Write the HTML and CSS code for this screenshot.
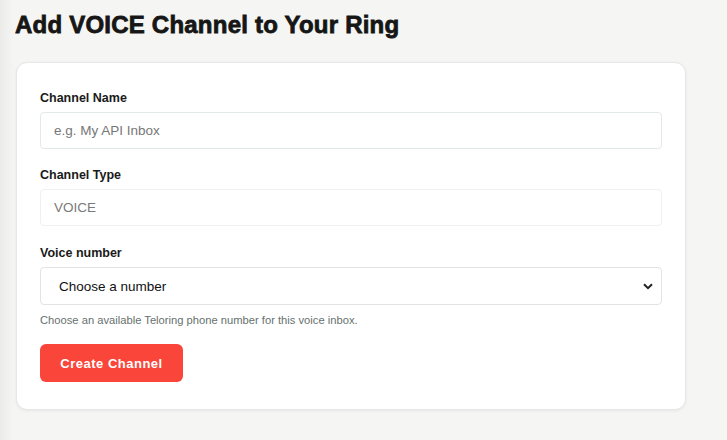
FILE: index.html
```html
<!DOCTYPE html>
<html lang="en">
<head>
<meta charset="utf-8">
<title>Add VOICE Channel</title>
<link rel="stylesheet" href="styles.css">
</head>
<body>
<main class="page">
  <h1 class="title">Add VOICE Channel to Your Ring</h1>
  <form class="card">
    <div class="field">
      <label class="label">Channel Name</label>
      <input class="input" type="text" placeholder="e.g. My API Inbox">
    </div>
    <div class="field field-type">
      <label class="label">Channel Type</label>
      <input class="input input-readonly" type="text" value="VOICE" readonly>
    </div>
    <div class="field field-last">
      <label class="label">Voice number</label>
      <div class="select">
        <span class="select-text">Choose a number</span>
        <svg class="chevron" width="10" height="7" viewBox="0 0 10 7"><path d="M1 1.2 L5 5.2 L9 1.2" fill="none" stroke="#222" stroke-width="2"/></svg>
      </div>
      <p class="help">Choose an available Teloring phone number for this voice inbox.</p>
    </div>
    <div class="actions">
      <button class="btn" type="button">Create Channel</button>
    </div>
  </form>
</main>
</body>
</html>
```
FILE: styles.css
```css
html, body {
  margin: 0;
  height: 100%;
}
body {
  background: linear-gradient(to right, #ebebe9 0px, #f5f5f3 14px, #f5f5f3 100%);
  font-family: "Liberation Sans", Arial, sans-serif;
  color: #1a1a1a;
}
.page {
  padding: 10px 41px 0 15px;
}
.title {
  margin: 0 0 22px 0;
  font-size: 24px;
  line-height: 30px;
  font-weight: 700;
  color: #161616;
  -webkit-text-stroke: 0.8px #161616;
  letter-spacing: 0.22px;
}
.card {
  margin-left: 1px;
  background: #fff;
  border: 1px solid #e4e8e6;
  border-radius: 11px;
  box-shadow: 0 1px 3px rgba(0,0,0,0.06);
  padding: 27px 23px 27px 23px;
}
.field {
  display: flex;
  flex-direction: column;
  margin-bottom: 18px;
}
.field-type {
  margin-bottom: 19px;
}
.field-last {
  margin-bottom: 17px;
}
.label {
  font-size: 12.5px;
  font-weight: 700;
  line-height: 16px;
  color: #1a1a1a;
  margin-bottom: 6px;
}
.input {
  box-sizing: border-box;
  height: 37px;
  border: 1px solid #e3e9e7;
  border-radius: 4px;
  padding: 0 13px;
  font-family: "Liberation Sans", Arial, sans-serif;
  font-size: 13.5px;
  color: #555;
  background: #fff;
  outline: none;
}
.input::placeholder {
  color: #777;
}
.input-readonly {
  border-color: #eef1f0;
  color: #7a7a7a;
}
.select {
  box-sizing: border-box;
  height: 38px;
  border: 1px solid #e2e4e4;
  border-radius: 4px;
  padding: 0 8px 0 18px;
  display: flex;
  align-items: center;
  justify-content: space-between;
}
.select-text {
  font-size: 13.5px;
  color: #111;
}
.help {
  margin: 8px 0 0 0;
  font-size: 11.2px;
  line-height: 14px;
  color: #66716e;
}
.actions {
  display: flex;
}
.btn {
  width: 143px;
  height: 38px;
  border: none;
  border-radius: 6px;
  background: #f9453a;
  color: #fff;
  font-family: "Liberation Sans", Arial, sans-serif;
  font-size: 13px;
  font-weight: 700;
  letter-spacing: 0.5px;
}
```
